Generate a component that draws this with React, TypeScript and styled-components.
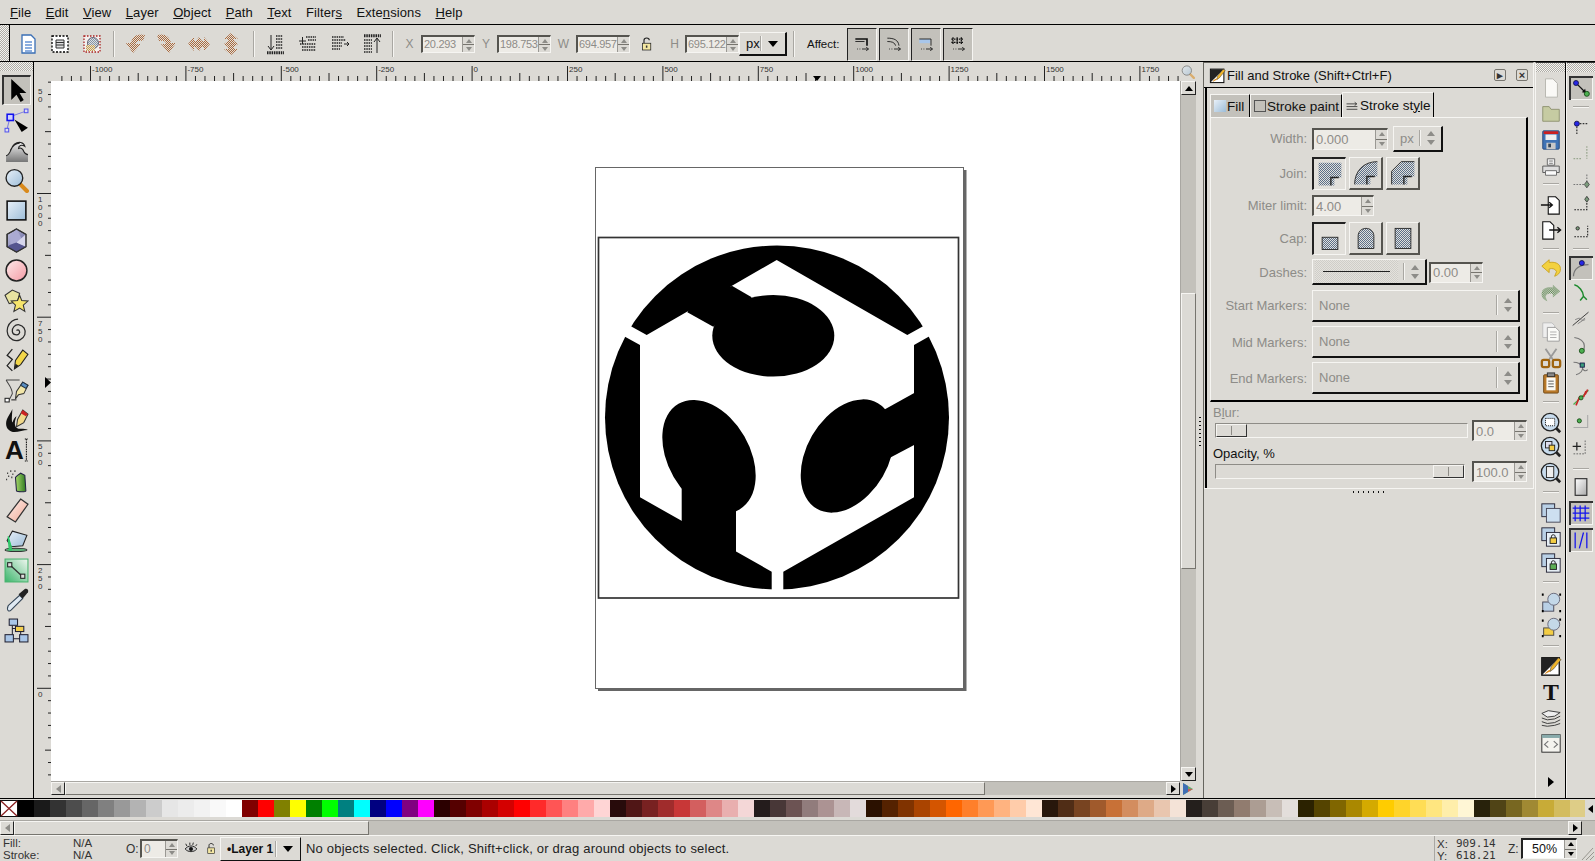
import React from "react";
import styled, { createGlobalStyle } from "styled-components";

const BG = "#dcdad5";
const TROUGH = "#c3c1bb";
const MUTED = "#8d8c88";

const undoPath = "M10 3 2 10l8 7v-4c4-1 7 0 8 3l-2 5c5-2 7-5 6-10-1-4-6-6-12-5z";

const art: Record<string, React.ReactNode> = {
  // left tool column
  select: <path d="M6 1v20l5-5 4 7 3-2-4-6.5h6.5z" fill="#000" />,
  node: (
    <>
      <path d="M7 8 21 3M5 12 3 20" stroke="#7d7de0" fill="none" />
      <rect x="3" y="6" width="6" height="6" fill="#cfd0ff" stroke="#11e" strokeWidth="1.5" />
      <rect x="19.5" y="1" width="3.5" height="3.5" fill="#dde" stroke="#55e" />
      <rect x="1" y="19.5" width="3.5" height="3.5" fill="#dde" stroke="#55e" />
      <path d="M10 11 23 19l-6 4z" fill="#000" />
    </>
  ),
  tweak: (
    <>
      <path d="M2 23v-6c5-1 4-8 8-11 4-3 9-2 10 2-3-2-6-1-6 2 2-1 4 0 5 3 1 2 2 3 4 3v7z" fill="url(#gGrey)" />
      <path d="M2 17c5-1 4-8 8-11 4-3 9-2 10 2-3-2-6-1-6 2 2-1 4 0 5 3 1 2 2 3 4 3M6 12c2-4 5-7 9-7" fill="none" stroke="#222" strokeWidth="1.1" />
    </>
  ),
  zoom: (
    <>
      <path d="M15 15 22 22" stroke="#d98a1c" strokeWidth="4" strokeLinecap="round" />
      <circle cx="10" cy="9.5" r="8" fill="url(#gBlue)" stroke="#222" strokeWidth="1.3" />
    </>
  ),
  rect: <rect x="3" y="3" width="18" height="18" fill="url(#gBlue)" stroke="#111" strokeWidth="1.5" />,
  box3d: (
    <>
      <path d="M12 1l9 5v12l-9 5-9-5V6z" fill="url(#gPurple)" stroke="#333" strokeWidth="1.2" />
      <path d="M12 1 6 7v9l6-2 9 4" fill="#aaaad2" />
      <path d="M6 16l6-2 9 4-9 5-9-5z" fill="#55558f" />
      <path d="M12 14l9-8v12z" fill="#d6d6ec" />
      <path d="M12 1l9 5v12l-9 5-9-5V6z" fill="none" stroke="#333" strokeWidth="1.2" />
    </>
  ),
  ellipse: <circle cx="12" cy="12" r="10" fill="url(#gPink)" stroke="#222" strokeWidth="1.4" />,
  star: (
    <>
      <path d="M1 7l7-5 7 3-2 8-8 2z" fill="#e8e3a0" stroke="#333" />
      <path d="M15 7l2 5 6 .5-4.5 4 1.500 6-5-3.3-5.5 3.3 1.5-6-4-4 6-.5z" fill="#f6e56c" stroke="#333" />
    </>
  ),
  spiral: (
    <path
      d="M12 12c2-2 4 1 2.5 3s-6 1.5-6.5-2 2.5-7 6.5-6.5 7 5 5.5 9.5-7 7-11.5 5-6.5-7-5-12 6-8 10-8"
      fill="none"
      stroke="#2a2a2a"
      strokeWidth="1.2"
    />
  ),
  pencil: (
    <>
      <path d="M8 1 3 7l5 4-5 6 5 5" fill="none" stroke="#222" strokeWidth="1.2" />
      <path d="M10 20l1-8 7-10 5 4-7 10z" fill="#f2d64a" stroke="#222" />
      <path d="M10 20l1-5 3 2z" fill="#222" />
    </>
  ),
  pen: (
    <>
      <path d="M2 2h13M2 2c3 5 6 8 6 13l-3 6" fill="none" stroke="#444" />
      <rect x="1" y="19.5" width="4" height="3.5" fill="#fff" stroke="#222" />
      <path d="M7 21h5" stroke="#222" />
      <path d="M14 16l-3 4 1-7 6-9 5 3-4 8z" fill="#f2e6a8" stroke="#333" />
      <path d="M16 7l2-3 5 3-2 3z" fill="#5a8fc4" stroke="#234" />
    </>
  ),
  callig: (
    <>
      <path d="M8 1c-2 5-6 9-6 14s4 8 8 8 9-2 13-2c-4-2-9 0-11-2-3-3-1-8 0-11-3 2-3 5-4 6-1-3 0-9 0-13z" fill="#111" />
      <path d="M12 18l1-7 5-9 5 4-4 8z" fill="#f0d88a" stroke="#333" />
      <path d="M16 5l2-3 5 4-2 2z" fill="#c22" />
    </>
  ),
  textTool: (
    <>
      <text x="1" y="20" fontFamily="Liberation Sans" fontWeight="700" fontSize="25" fill="#111">A</text>
      <path d="M20 1h3M21.5 1v21M20 22h3" stroke="#111" strokeDasharray="1.5 .8" fill="none" />
    </>
  ),
  spray: (
    <>
      <path d="M3 5h1M6 3h1M8 6h1M4 8h1M7 9h1M2 11h1M10 3h1" stroke="#333" strokeWidth="1.5" />
      <path d="M11 9l2-2 3-2 4 2 1 15c0 1-8 1-9 0z" fill="url(#gGreen)" stroke="#224" />
    </>
  ),
  eraser: <path d="M16 1l7 5-12 17-8-5z" fill="url(#gSalmon)" stroke="#333" strokeWidth="1.2" />,
  bucket: (
    <>
      <path d="M1 21c0-2 20-2 21 0 0 2-21 2-21 0z" fill="#5fb37a" stroke="#333" />
      <path d="M8 3l14 4-4 10-11 1-4-6z" fill="url(#gBlue)" stroke="#222" />
      <path d="M4 8l3 10v3H5z" fill="#57b56f" stroke="#2c6" />
    </>
  ),
  gradient: (
    <>
      <rect x="1" y="1" width="22" height="22" fill="url(#gGreenFade)" stroke="#47b36d" />
      <path d="M6 7 18 18" stroke="#333" strokeWidth="1.3" />
      <rect x="3.5" y="4.5" width="4" height="4" fill="#ddd" stroke="#222" />
      <rect x="16" y="15.5" width="4" height="4" fill="#ddd" stroke="#222" />
    </>
  ),
  dropper: (
    <>
      <path d="M4 17 15 7l3 3L7 21c-2 2-5 1-3-4z" fill="#dfe9f2" stroke="#345" />
      <path d="M14 6l6-5c2-1 4 1 3 3l-5 6z" fill="#222" />
    </>
  ),
  connector: (
    <>
      <path d="M8 7v3h8v6M8 10v6M5 20h14" stroke="#223" fill="none" />
      <rect x="5" y="1" width="8" height="6" fill="#a9c6e8" stroke="#223" />
      <rect x="11" y="8" width="8" height="5" fill="#f4cf4d" stroke="#223" />
      <rect x="1" y="16" width="8" height="7" fill="#a9c6e8" stroke="#223" />
      <rect x="15" y="16" width="8" height="7" fill="#a9c6e8" stroke="#223" />
    </>
  ),
  // top toolbar
  newDoc: (
    <>
      <path d="M6 3h9l4 4v14H6z" fill="#fff" stroke="#3a6fb5" strokeWidth="1.3" />
      <path d="M9 10h7M9 13h7M9 16h7M9 19h7" stroke="#1a5fc0" strokeWidth="1.2" />
    </>
  ),
  selAll: (
    <>
      <rect x="4" y="4" width="16" height="16" fill="#fff" stroke="#000" strokeWidth="1.3" strokeDasharray="2 1.5" />
      <path d="M8 8h8v8H8z" fill="#ddd" stroke="#333" />
      <path d="M8 10.5h8M8 13h8" stroke="#333" />
    </>
  ),
  selLayers: (
    <>
      <rect x="4" y="4" width="16" height="16" fill="#f4f0ee" stroke="#a22" strokeWidth="1.3" strokeDasharray="1.5 1.5" />
      <circle cx="13" cy="11" r="5.5" fill="url(#ditherBlue)" stroke="#667" />
      <rect x="6" y="13" width="9" height="6" fill="url(#ditherGold)" />
    </>
  ),
  rotCcw: <path d="M22 3c-7-2-13 1-14 8H3l7 10 8-9h-5c0-3 3-4 7-3z" fill="url(#ditherBrown)" />,
  rotCw: <path d="M2 3c7-2 13 1 14 8h5l-7 10-8-9h5c0-3-3-4-7-3z" fill="url(#ditherBrown)" />,
  flipH: <path d="M1 12l6-7v4h2l3-4 3 4h2V5l6 7-6 7v-4h-2l-3 4-3-4H7v4z" fill="url(#ditherBrown)" />,
  flipV: <path d="M12 1l7 6h-4v2l4 3-4 3v2h4l-7 6-7-6h4v-2l-4-3 4-3V7H5z" fill="url(#ditherBrown)" />,
  alignBottom: (
    <>
      <path d="M7 3v14M4 14l3 4 3-4" stroke="#222" fill="none" />
      <path d="M12 4h7M12 7h7M12 10h7M12 13h7M12 16h7M3 20h17M3 21.5h17" stroke="#222" strokeWidth="1.3" strokeDasharray="1.5 .8" />
    </>
  ),
  alignDown: (
    <>
      <path d="M3 9h7M6.5 5v7" stroke="#222" />
      <path d="M10 5h10M12 8h8M4 12h16M6 15h14M6 18h14" stroke="#222" strokeWidth="1.3" strokeDasharray="1.5 .8" />
    </>
  ),
  alignUp: (
    <>
      <path d="M4 5h12M4 8h14M4 11h10M4 14h10M4 17h8" stroke="#222" strokeWidth="1.3" strokeDasharray="1.5 .8" />
      <path d="M16 12h5M19 10l2 2-2 2" stroke="#222" fill="none" />
    </>
  ),
  alignTop: (
    <>
      <path d="M4 3h17M4 4.5h17M4 8h8M4 11h8M4 14h8M4 17h8M4 20h8" stroke="#222" strokeWidth="1.3" strokeDasharray="1.5 .8" />
      <path d="M17 21V7M14 10l3-4 3 4" stroke="#222" fill="none" />
    </>
  ),
  lockOpen: (
    <>
      <path d="M8 11V7c0-4 7-4 7 0" fill="none" stroke="#222" strokeWidth="1.5" />
      <rect x="6" y="11" width="11" height="9" fill="#f4e7a2" stroke="#222" />
      <rect x="10.5" y="14" width="2" height="3" fill="#333" />
    </>
  ),
  affect1: (
    <>
      <path d="M4 6h14v8" fill="none" stroke="#111" strokeWidth="2" />
      <path d="M4 9h11" stroke="#111" />
      <path d="M6 18h1M9 18h1M12 18h7M17 16l3 2-3 2" stroke="#111" fill="none" />
    </>
  ),
  affect2: (
    <>
      <path d="M4 5c8 0 13 2 14 9M4 9c5 0 9 1 10 5" fill="none" stroke="#111" />
      <path d="M6 18h1M9 18h1M12 18h7M17 16l3 2-3 2" stroke="#111" fill="none" />
    </>
  ),
  affect3: (
    <>
      <rect x="4" y="6" width="13" height="5" fill="#a8c6ea" />
      <path d="M4 6h14v8" fill="none" stroke="#111" />
      <path d="M6 18h1M9 18h1M12 18h7M17 16l3 2-3 2" stroke="#111" fill="none" />
    </>
  ),
  affect4: (
    <>
      <path d="M4 6h15M4 10h15M6 4v8M11 4v8M16 4v8" stroke="#111" strokeWidth="1.5" strokeDasharray="2 1" />
      <path d="M6 18h1M9 18h1M12 18h7M17 16l3 2-3 2" stroke="#111" fill="none" />
    </>
  ),
  // command bar
  docBlank: <path d="M6 2h8l5 5v15H6z" fill="#faf9f6" stroke="#b5b3ad" />,
  folder: <path d="M3 5h7l2 3h9v13H3z" fill="#c6cba2" stroke="#8d9270" />,
  save: (
    <>
      <rect x="3" y="2" width="18" height="20" rx="1" fill="#3f73b5" stroke="#24467a" />
      <rect x="4" y="2.5" width="16" height="3" fill="#cc1f1f" />
      <rect x="6" y="6" width="12" height="6" fill="#eee" />
      <rect x="7" y="15" width="10" height="7" fill="#c8c8c8" />
      <rect x="9" y="16" width="3" height="4" fill="#345" />
    </>
  ),
  print: (
    <>
      <path d="M8 3h8v7H8z" fill="#eee" stroke="#666" />
      <path d="M3 11h18v7H3z" fill="#ddd" stroke="#555" />
      <path d="M6 16h12v5H6z" fill="#fafafa" stroke="#666" />
      <path d="M10 5.5h4M10 8h4" stroke="#777" />
    </>
  ),
  importDoc: (
    <>
      <path d="M9 3h8l4 4v15H9z" fill="#fff" stroke="#111" strokeWidth="1.2" />
      <path d="M1 12h12M10 9l3.5 3-3.5 3" stroke="#111" strokeWidth="1.4" fill="none" />
    </>
  ),
  exportDoc: (
    <>
      <path d="M3 3h8l4 4v15H3z" fill="#fff" stroke="#111" strokeWidth="1.2" />
      <path d="M10 12h12M19 9l3.5 3-3.5 3" stroke="#111" strokeWidth="1.4" fill="none" />
    </>
  ),
  undo: <path d={undoPath} fill="#f3d13f" stroke="#c9a21f" />,
  redo: <path d={undoPath} transform="matrix(-1 0 0 1 24 0)" fill="url(#ditherGreen)" />,
  copy: (
    <>
      <path d="M3 2h10l3 3v13H3z" fill="#eee" stroke="#bbb" />
      <path d="M8 7h9l4 4v11H8z" fill="#fbfbf8" stroke="#999" />
      <path d="M11 12h7M11 15h7M11 18h7" stroke="#aaa" />
    </>
  ),
  cut: (
    <>
      <path d="M6 2l9 13M18 2 9 15" stroke="#999" strokeWidth="2" />
      <rect x="2" y="14" width="8" height="8" rx="2" fill="none" stroke="#a0640f" strokeWidth="2.5" />
      <rect x="14" y="14" width="8" height="8" rx="2" fill="none" stroke="#a0640f" strokeWidth="2.5" />
    </>
  ),
  paste: (
    <>
      <rect x="4" y="3" width="16" height="20" rx="1" fill="#b97a2a" stroke="#6d4513" />
      <rect x="7" y="6" width="10" height="14" fill="#fbfaf4" />
      <rect x="8" y="1" width="8" height="4" fill="#888" stroke="#333" />
      <path d="M9 10h6M9 13h6M9 16h6" stroke="#555" />
    </>
  ),
  zoomSel: (
    <>
      <path d="M17 17l5 5" stroke="#222" strokeWidth="3" />
      <circle cx="11" cy="11" r="9.5" fill="#c8dcee" stroke="#222" strokeWidth="1.4" />
      <rect x="6" y="7" width="10" height="8" fill="#fff" stroke="#111" strokeDasharray="1.2 1" />
    </>
  ),
  zoomDraw: (
    <>
      <path d="M17 17l5 5" stroke="#222" strokeWidth="3" />
      <circle cx="11" cy="11" r="9.5" fill="#c8dcee" stroke="#222" strokeWidth="1.4" />
      <rect x="6" y="6" width="7" height="7" fill="#dde" stroke="#222" />
      <rect x="10" y="10" width="6" height="6" fill="#f3cd44" stroke="#222" />
    </>
  ),
  zoomPage: (
    <>
      <path d="M17 17l5 5" stroke="#222" strokeWidth="3" />
      <circle cx="11" cy="11" r="9.5" fill="#c8dcee" stroke="#222" strokeWidth="1.4" />
      <rect x="7" y="5" width="8" height="12" fill="#eee" stroke="#222" />
    </>
  ),
  dup: (
    <>
      <rect x="2" y="2" width="14" height="14" fill="#b9d0e6" stroke="#223" />
      <rect x="7" y="7" width="15" height="15" fill="#cddff0" stroke="#445" />
    </>
  ),
  clone: (
    <>
      <rect x="2" y="2" width="14" height="14" fill="#b9d0e6" stroke="#223" />
      <rect x="7" y="7" width="15" height="15" fill="#e6eef5" stroke="#223" />
      <rect x="11" y="13" width="7" height="6" fill="#f3cd44" stroke="#222" />
      <path d="M12.5 13v-2c0-2 4-2 4 0v2" fill="none" stroke="#222" />
    </>
  ),
  unlink: (
    <>
      <rect x="2" y="2" width="14" height="14" fill="#b9d0e6" stroke="#223" />
      <rect x="7" y="7" width="15" height="15" fill="#e6eef5" stroke="#223" />
      <rect x="11" y="13" width="7" height="6" fill="#5cae55" stroke="#222" />
      <path d="M12.5 13v-2c0-2 4-2 4 0v2" fill="none" stroke="#222" />
    </>
  ),
  group: (
    <>
      <rect x="3" y="12" width="12" height="10" fill="#b9d0e6" stroke="#445" />
      <circle cx="15" cy="9" r="6.5" fill="#c4d8e8" stroke="#667" />
      <path d="M2 4h2M2 22h2M21 4h2M21 22h2" stroke="#000" strokeWidth="2.5" />
    </>
  ),
  ungroup: (
    <>
      <rect x="4" y="13" width="11" height="8" fill="#f3cd44" stroke="#444" />
      <circle cx="15" cy="9" r="6.5" fill="#c4d8e8" stroke="#667" />
      <path d="M2 5h2M2 22h2M21 4h2M21 22h2" stroke="#000" strokeWidth="2.5" />
    </>
  ),
  fillStroke: (
    <>
      <rect x="2" y="3" width="19" height="19" fill="#fff" stroke="#111" strokeWidth="1.5" />
      <path d="M2 22V3h19z" fill="#222" />
      <path d="M11 18l1-5 8-10 3 2-8 10z" fill="#f0b429" stroke="#333" strokeWidth=".6" />
      <path d="M11 18c-2 1-4 2-6 3 1-2 3-4 6-5z" fill="#d98a1c" />
    </>
  ),
  textCmd: <text x="12" y="21" textAnchor="middle" fontFamily="Liberation Serif" fontWeight="700" fontSize="26" fill="#111">T</text>,
  layers: (
    <>
      <path d="M2 7l7-3 13 2-6 4-8 1z" fill="#eee" stroke="#333" />
      <path d="M2 12l6 2 8-1 6-3M2 16l6 2 8-1 6-3M2 20l6 1 8-1 6-2" fill="none" stroke="#333" />
    </>
  ),
  xml: (
    <>
      <rect x="2" y="3" width="20" height="19" fill="#f4f3ee" stroke="#222" />
      <rect x="2" y="3" width="20" height="3.5" fill="#8aa" />
      <path d="M9 10l-4 3.5L9 17M15 10l4 3.5L15 17" fill="none" stroke="#777" strokeWidth="1.3" />
    </>
  ),
  // snap bar
  snapToggle: (
    <>
      <path d="M7 7l11 11" stroke="#111" strokeWidth="1.5" />
      <path d="M18 18l-5-1 4-4z" fill="#111" />
      <circle cx="6" cy="6" r="3" fill="#2626e6" stroke="#114" />
      <circle cx="19" cy="19" r="3" fill="#4caf50" stroke="#141" />
    </>
  ),
  snapBox: (
    <>
      <path d="M7 8h14M7 8v14" stroke="#333" strokeWidth="1.5" strokeDasharray="2 1.5" />
      <circle cx="7" cy="8" r="3" fill="#2626e6" stroke="#114" />
    </>
  ),
  snapFaint1: <path d="M3 20h10M19 5v15" stroke="#99a68f" strokeWidth="1.5" strokeDasharray="2 1.5" fill="none" />,
  snapEdge: (
    <>
      <path d="M3 15h16M19 3v12" stroke="#777" strokeWidth="1.3" strokeDasharray="2 1.5" />
      <path d="M19 11l3 4-3 4-3-4z" fill="#7c9c7c" stroke="#444" />
    </>
  ),
  snapMid: (
    <>
      <path d="M4 20h15v-8" fill="none" stroke="#222" strokeWidth="1.3" strokeDasharray="2 1.5" />
      <path d="M19 4l2.5 3.5L19 11l-2.5-3.5z" fill="#7c9c7c" stroke="#333" />
    </>
  ),
  snapCenter: (
    <>
      <path d="M4 20h16V7" fill="none" stroke="#222" strokeWidth="1.3" strokeDasharray="2 1.5" />
      <circle cx="8" cy="10" r="2" fill="#7c9c7c" stroke="#222" />
    </>
  ),
  snapNodes: (
    <>
      <path d="M3 22c0-9 7-14 18-14" fill="none" stroke="#777" strokeWidth="1.4" />
      <circle cx="13" cy="6" r="3" fill="#2626e6" stroke="#114" />
    </>
  ),
  snapPath: <path d="M4 2c5 1 11 8 11 14M11 21l4-5 4 4" fill="none" stroke="#1d8a2e" strokeWidth="1.8" />,
  snapCross: (
    <>
      <path d="M2 21 21 5" stroke="#222" />
      <path d="M5 14l5-2 3 3 4-3M8 19l6-4 3-1" stroke="#777" fill="none" />
    </>
  ),
  snapSmooth: (
    <>
      <path d="M4 3c7 1 12 5 12 10s-2 8-4 9" fill="none" stroke="#777" strokeWidth="1.4" />
      <circle cx="13" cy="19" r="3" fill="#4caf50" stroke="#141" />
    </>
  ),
  snapCusp: (
    <>
      <path d="M3 5c4 0 9 2 11 6M14 11c-1 3 3 6 6 3M14 11c0 5-4 8-8 9" fill="none" stroke="#777" strokeWidth="1.3" />
      <rect x="11" y="6" width="5" height="5" fill="#3a9c7c" stroke="#114" />
    </>
  ),
  snapMidLine: (
    <>
      <path d="M3 21l18-17" stroke="#4caf50" strokeWidth="1.5" />
      <path d="M6 22 9 15M8 17l3-6M15 12l3-7M17 9l3-6" stroke="#c62828" strokeWidth="2" />
      <circle cx="12" cy="13" r="2.5" fill="#4caf50" stroke="#141" />
    </>
  ),
  snapDot: (
    <>
      <path d="M3 21h17V6" fill="none" stroke="#aaa" strokeWidth="1.3" />
      <circle cx="10" cy="13" r="2.5" fill="#4caf50" stroke="#141" />
    </>
  ),
  snapPlus: (
    <>
      <path d="M7 5v10M2 10h10" stroke="#222" strokeWidth="1.5" />
      <path d="M17 3v16M3 19h14" stroke="#555" strokeDasharray="2 1.5" />
    </>
  ),
  pageEdge: <rect x="5" y="2" width="14" height="20" fill="url(#gPage)" stroke="#333" strokeWidth="1.4" />,
  grid: <path d="M5 3v19M11 3v19M17 3v19M2 6h20M2 12h20M2 18h20" stroke="#1414ee" strokeWidth="1.5" />,
  guide: <path d="M5 3v19M19 3v19M10 22 15 3" stroke="#1414ee" strokeWidth="1.5" />,
  // panel tabs
  strokeStyle: <path d="M1 9h18M1 14h20M1 19h20M16 6l4 3-4 3" stroke="#111" fill="none" strokeWidth="1.3" />,
  eye: (
    <>
      <path d="M2 12c5-7 15-7 20 0-5 6-15 6-20 0z" fill="#ccc" stroke="#111" strokeWidth="1.5" />
      <circle cx="12" cy="12" r="3.5" fill="#111" />
      <path d="M5 7 3 3M10 5V1M15 5l1-4M20 7l2-3" stroke="#111" strokeWidth="1.5" />
    </>
  ),
  // join and cap buttons
  joinMiter: (
    <>
      <path d="M3 3h26v17h-8v9H3z" fill="url(#ditherSteel)" />
      <path d="M17 29v-9h9" fill="none" stroke="#222" strokeWidth="1.5" />
    </>
  ),
  joinRound: (
    <>
      <path d="M3 29c0-15 10-26 26-26v17h-8v9z" fill="url(#ditherSteel)" />
      <path d="M3 29C3 14 13 3 29 3" fill="none" stroke="#222" />
      <path d="M17 29v-9h9" fill="none" stroke="#222" strokeWidth="1.5" />
    </>
  ),
  joinBevel: (
    <>
      <path d="M3 29V14L14 3h15v17h-8v9z" fill="url(#ditherSteel)" />
      <path d="M3 29V14L14 3h15" fill="none" stroke="#222" />
      <path d="M17 29v-9h9" fill="none" stroke="#222" strokeWidth="1.5" />
    </>
  ),
  capButt: <rect x="7" y="14" width="18" height="14" fill="url(#ditherSteel)" stroke="#222" />,
  capRound: <path d="M7 28V14c0-12 18-12 18 0v14z" fill="url(#ditherSteel)" stroke="#222" />,
  capSquare: <rect x="7" y="5" width="18" height="23" fill="url(#ditherSteel)" stroke="#222" />,
};

const palette =
  "000000 1a1a1a 333333 4d4d4d 666666 808080 999999 b3b3b3 cccccc e6e6e6 ececec f2f2f2 f9f9f9 ffffff " +
  "800000 ff0000 808000 ffff00 008000 00ff00 008080 00ffff 000080 0000ff 800080 ff00ff " +
  "2b0000 550000 800000 aa0000 d40000 ff0000 ff2a2a ff5555 ff8080 ffaaaa ffd5d5 " +
  "280b0b 501616 782121 a02c2c c83737 d35f5f de8787 e9afaf f4d7d7 " +
  "241c1c 483737 6c5353 917c7c ac9393 c8b7b7 e3dbdb " +
  "2b1100 552200 803300 aa4400 d45500 ff6600 ff7f2a ff9955 ffb380 ffccaa ffe6d5 " +
  "28170b 502d16 784421 a05a2c c87137 d38d5f deaa87 e9c6af f4e3d7 " +
  "241f1c 483e37 6c5d53 917c6f ac9d93 c8beb7 e3dedb " +
  "2b2200 554400 806600 aa8800 d4aa00 ffcc00 ffd42a ffdd55 ffe680 ffeeaa fff6d5 " +
  "28220b 504416 786721 a08933 c8ab37 d3bc5f decd87";

const menus: [string, string, string][] = [
  ["", "F", "ile"],
  ["", "E", "dit"],
  ["", "V", "iew"],
  ["", "L", "ayer"],
  ["", "O", "bject"],
  ["", "P", "ath"],
  ["", "T", "ext"],
  ["Filter", "s", ""],
  ["Exte", "n", "sions"],
  ["", "H", "elp"],
];

const leftTools = [
  "select", "node", "tweak", "zoom", "rect", "box3d", "ellipse", "star", "spiral", "pencil",
  "pen", "callig", "textTool", "spray", "eraser", "bucket", "gradient", "dropper", "connector",
];

// [icon or "-" for a separator, space above, pressed]
const commands: [string, number, boolean?][] = [
  ["docBlank", 4], ["folder", 1], ["save", 3], ["print", 3], ["-", 4], ["importDoc", 8], ["exportDoc", 1],
  ["-", 6], ["undo", 6], ["redo", 1], ["-", 7], ["copy", 6], ["cut", 2], ["paste", 1], ["-", 6],
  ["zoomSel", 8], ["zoomDraw", 0], ["zoomPage", 2], ["-", 6], ["dup", 8], ["clone", 0], ["unlink", 2],
  ["-", 6], ["group", 7], ["ungroup", 1], ["-", 6], ["fillStroke", 7], ["textCmd", 2], ["layers", 2], ["xml", 1],
];

const snaps: [string, number, boolean?][] = [
  ["snapToggle", 4, true], ["-", 6], ["snapBox", 7], ["snapFaint1", 1], ["snapEdge", 6], ["snapMid", -3],
  ["snapCenter", 3], ["-", 6], ["snapNodes", 6, true], ["snapPath", 1], ["snapCross", 1], ["snapSmooth", 3],
  ["snapCusp", -1], ["snapMidLine", 5], ["snapDot", -1], ["snapPlus", 4], ["-", 8], ["pageEdge", 5],
  ["grid", 2, true], ["guide", 3, true],
];

const GlobalStyle = createGlobalStyle`
  html, body {
    margin: 0;
    overflow: hidden;
    background: ${BG};
  }
`;

const Root = styled.div`
  width: 1595px;
  height: 861px;
  display: flex;
  flex-direction: column;
  background: ${BG};
  color: #111;
  font-family: "Liberation Sans", Arial, sans-serif;
  font-size: 13px;
  overflow: hidden;
`;

const Defs = styled.svg`
  position: absolute;
  width: 0;
  height: 0;
`;

const IconSvg = styled.svg`
  display: block;
  flex: none;
`;

const Icon: React.FC<{ n: string; s?: number; box?: number }> = ({ n, s = 24, box = 24 }) => (
  <IconSvg width={s} height={s} viewBox={`0 0 ${box} ${box}`}>
    {art[n]}
  </IconSvg>
);

const Grip = styled.div`
  background: repeating-conic-gradient(#f5f4f1 0 25%, #aeaca6 0 50%) 0 0 / 2px 2px;
`;

const MenuBar = styled.div`
  height: 24px;
  flex: none;
  display: flex;
  align-items: center;
  gap: 14.4px;
  padding-left: 10px;
  border-bottom: 1px solid #000;
`;

const MenuItem = styled.span`
  font-size: 13px;
  letter-spacing: 0.1px;
`;

const Toolbar = styled.div`
  height: 36px;
  flex: none;
  box-sizing: content-box;
  display: flex;
  align-items: center;
  border-bottom: 1px solid #000;
`;

const ToolbarGrip = styled(Grip)`
  width: 9px;
  height: 100%;
  border-right: 1px solid #000;
  margin-right: 2px;
`;

const ToolbarRow = styled.div`
  flex: 1;
  height: 100%;
  padding-top: 2px;
  box-sizing: border-box;
  display: flex;
  align-items: center;
`;

const ActionSlot = styled.div`
  width: 32px;
  height: 30px;
  flex: none;
  display: flex;
  align-items: center;
  justify-content: center;
`;

const ToolbarSep = styled.div<{ $w: number }>`
  width: ${(p) => p.$w}px;
  height: 26px;
  flex: none;
  display: flex;
  justify-content: center;

  &::after {
    content: "";
    width: 1px;
    height: 100%;
    background: #a9a7a2;
    border-right: 1px solid #f6f5f2;
  }
`;

const CoordLabel = styled.span<{ $w: number }>`
  width: ${(p) => p.$w}px;
  flex: none;
  text-align: center;
  font-size: 12px;
  color: ${MUTED};
`;

const LockSlot = styled.div`
  width: 34px;
  flex: none;
  display: flex;
  justify-content: center;
`;

const AffectLabel = styled.span`
  width: 40px;
  margin-left: 7px;
  flex: none;
  font-size: 11.5px;
`;

const AffectButton = styled.div`
  width: 30px;
  height: 33px;
  margin-right: 2px;
  flex: none;
  display: flex;
  align-items: center;
  justify-content: center;
  background: ${TROUGH};
  border-top: 1px solid #222;
  border-left: 1px solid #222;
  border-right: 1px solid #f6f5f2;
  border-bottom: 1px solid #f6f5f2;
  box-sizing: border-box;
`;

const SpinBox = styled.div<{ $w: number; $h: number }>`
  width: ${(p) => p.$w}px;
  height: ${(p) => p.$h}px;
  flex: none;
  box-sizing: border-box;
  display: flex;
  border-top: 2px solid #55544f;
  border-left: 2px solid #55544f;
  border-right: 1px solid #f6f5f2;
  border-bottom: 1px solid #f6f5f2;
  background: #edebe6;
`;

const SpinValue = styled.div<{ $fs: number; $tight?: boolean }>`
  flex: 1;
  min-width: 0;
  padding-left: ${(p) => (p.$tight ? 1 : 2)}px;
  white-space: nowrap;
  color: ${MUTED};
  font-size: ${(p) => p.$fs}px;
  letter-spacing: ${(p) => (p.$tight ? "-0.3px" : "0")};
  line-height: 1;
  display: flex;
  align-items: center;
`;

const SpinArrows = styled.div`
  width: 11px;
  flex: none;
  display: flex;
  flex-direction: column;
  border-left: 1px solid #9a9893;
  background: ${BG};
`;

const SpinHalf = styled.div<{ $down?: boolean }>`
  flex: 1;
  display: flex;
  align-items: center;
  justify-content: center;
  border-top: ${(p) => (p.$down ? "1px solid #77756f" : "none")};

  &::after {
    content: "";
    border-left: 3px solid transparent;
    border-right: 3px solid transparent;
    ${(p) => (p.$down ? "border-top: 4px solid #8d8c88;" : "border-bottom: 4px solid #8d8c88;")}
  }
`;

const Spin: React.FC<{ w: number; h: number; v: string; fs?: number; tight?: boolean }> = ({ w, h, v, fs = 13, tight }) => (
  <SpinBox $w={w} $h={h}>
    <SpinValue $fs={fs} $tight={tight}>{v}</SpinValue>
    <SpinArrows>
      <SpinHalf />
      <SpinHalf $down />
    </SpinArrows>
  </SpinBox>
);

const Combo = styled.div<{ $w: number; $h: number }>`
  width: ${(p) => p.$w}px;
  height: ${(p) => p.$h}px;
  flex: none;
  box-sizing: border-box;
  display: flex;
  align-items: center;
  background: ${BG};
  border-top: 1px solid #f6f5f2;
  border-left: 1px solid #f6f5f2;
  border-right: 2px solid #111;
  border-bottom: 2px solid #111;
`;

const ComboText = styled.span<{ $muted?: boolean }>`
  flex: 1;
  padding-left: 6px;
  color: ${(p) => (p.$muted ? MUTED : "#111")};
  font-size: 13px;
`;

const ComboSep = styled.i`
  width: 1px;
  height: 70%;
  flex: none;
  background: #a9a7a2;
  border-right: 1px solid #f6f5f2;
`;

const ArrowDown = styled.i`
  margin: 0 7px 0 6px;
  flex: none;
  border-left: 5px solid transparent;
  border-right: 5px solid transparent;
  border-top: 6px solid #000;
`;

const UpDown = styled.i`
  width: 9px;
  height: 16px;
  margin: 0 5px 0 6px;
  flex: none;
  position: relative;

  &::before,
  &::after {
    content: "";
    position: absolute;
    left: 0;
    border-left: 4px solid transparent;
    border-right: 4px solid transparent;
  }
  &::before {
    top: 1px;
    border-bottom: 5px solid ${MUTED};
  }
  &::after {
    bottom: 1px;
    border-top: 5px solid ${MUTED};
  }
`;

const Workspace = styled.div`
  height: 736px;
  flex: none;
  display: flex;
  border-bottom: 1px solid #000;
`;

const ToolColumn = styled.div`
  width: 33px;
  flex: none;
  display: flex;
  flex-direction: column;
  align-items: center;
  border-right: 1px solid #000;
`;

const ColumnGrip = styled(Grip)`
  align-self: stretch;
  height: 9px;
  margin-bottom: 4px;
`;

const ToolSlot = styled.div<{ $on?: boolean }>`
  width: 29px;
  height: 30px;
  flex: none;
  display: flex;
  align-items: center;
  justify-content: center;
  box-sizing: border-box;
  ${(p) =>
    p.$on &&
    `background: ${TROUGH};
     border-top: 2px solid #333;
     border-left: 2px solid #333;
     border-right: 1px solid #f6f5f2;
     border-bottom: 1px solid #f6f5f2;`}
`;

const CanvasArea = styled.div`
  width: 1169px;
  flex: none;
  display: grid;
  grid-template-columns: 17px 1129px 16px 7px;
  grid-template-rows: 19px 700px 14px 1fr;
`;

const Ruler = styled.svg<{ $wide?: boolean }>`
  display: block;
  background: ${BG};
  ${(p) => p.$wide && "grid-column: 1 / 3;"}
`;

const ZoomCorner = styled.div`
  display: flex;
  align-items: center;
  justify-content: center;
  opacity: 0.55;
`;

const Canvas = styled.svg`
  display: block;
  background: #fff;
`;

const VScroll = styled.div`
  display: flex;
  flex-direction: column;
  grid-column: 3;
  grid-row: 2;
  background: ${TROUGH};
  border-left: 1px solid #a9a7a2;
  box-sizing: border-box;
`;

const HScroll = styled.div`
  display: flex;
  background: ${TROUGH};
  border-top: 1px solid #a9a7a2;
  box-sizing: border-box;
`;

const ScrollArrow = styled.div<{ $dir: "up" | "down" | "left" | "right"; $muted?: boolean }>`
  flex: none;
  width: ${(p) => (p.$dir === "up" || p.$dir === "down" ? "100%" : "14px")};
  height: ${(p) => (p.$dir === "up" || p.$dir === "down" ? "14px" : "100%")};
  box-sizing: border-box;
  display: flex;
  align-items: center;
  justify-content: center;
  background: ${BG};
  border-top: 1px solid #f6f5f2;
  border-left: 1px solid #f6f5f2;
  border-right: 1px solid #222;
  border-bottom: 1px solid #222;

  &::after {
    content: "";
    ${(p) => {
      const c = p.$muted ? "#8d8c88" : "#000";
      if (p.$dir === "up") return `border-left:4px solid transparent;border-right:4px solid transparent;border-bottom:5px solid ${c};`;
      if (p.$dir === "down") return `border-left:4px solid transparent;border-right:4px solid transparent;border-top:5px solid ${c};`;
      if (p.$dir === "left") return `border-top:4px solid transparent;border-bottom:4px solid transparent;border-right:5px solid ${c};`;
      return `border-top:4px solid transparent;border-bottom:4px solid transparent;border-left:5px solid ${c};`;
    }}
  }
`;

const ScrollThumb = styled.div<{ $size: number; $vertical?: boolean }>`
  flex: none;
  ${(p) => (p.$vertical ? `height: ${p.$size}px;` : `width: ${p.$size}px;`)}
  box-sizing: border-box;
  background: ${BG};
  border-top: 1px solid #f6f5f2;
  border-left: 1px solid #f6f5f2;
  border-right: 1px solid #77756f;
  border-bottom: 1px solid #77756f;
`;

const ScrollGap = styled.div<{ $size?: number; $vertical?: boolean }>`
  ${(p) => (p.$size ? (p.$vertical ? `height: ${p.$size}px;` : `width: ${p.$size}px;`) : "flex: 1;")}
  flex-shrink: 0;
`;

const CmsIcon = styled.div`
  display: flex;
  justify-content: center;
  padding-top: 2px;
`;

const DockGripColumn = styled.div`
  grid-column: 4;
  grid-row: 1 / 5;
  display: flex;
  align-items: center;
  justify-content: center;
  padding-top: 6px;
`;

const DotsV = styled.div`
  width: 2px;
  height: 32px;
  background: repeating-linear-gradient(#111 0 1px, transparent 1px 4px);
`;

const Dock = styled.div`
  width: 331px;
  flex: none;
  display: flex;
  flex-direction: column;
  border-left: 1px solid #66655f;
`;

const DockPanel = styled.div`
  height: 427px;
  flex: none;
  box-sizing: border-box;
  margin-right: 1px;
  border-top: 1px solid #66655f;
  border-right: 1px solid #f6f5f2;
  border-bottom: 1px solid #f6f5f2;
  display: flex;
  flex-direction: column;
`;

const DockTitle = styled.div`
  height: 24px;
  flex: none;
  display: flex;
  align-items: center;
  padding: 0 5px;
  border-bottom: 1px solid #000;
`;

const DockTitleText = styled.span`
  margin-left: 1px;
  flex: 1;
  font-size: 13px;
`;

const DockButton = styled.div`
  width: 10px;
  height: 10px;
  margin-left: 10px;
  flex: none;
  border: 1px solid #77756f;
  border-radius: 2px;
  display: flex;
  align-items: center;
  justify-content: center;
  color: #333;
  font-size: 11px;
  line-height: 1;
  font-weight: 700;
`;

const DockBody = styled.div`
  flex: 1;
  padding: 4px 5px 0 2px;
  margin-left: 1px;
  border-left: 2px solid #000;
  display: flex;
  flex-direction: column;
`;

const Tabs = styled.div`
  height: 25px;
  flex: none;
  display: flex;
  align-items: flex-end;
  padding-left: 1px;
`;

const Tab = styled.div<{ $on?: boolean; $w: number }>`
  width: ${(p) => p.$w}px;
  height: ${(p) => (p.$on ? 25 : 23)}px;
  box-sizing: border-box;
  flex: none;
  display: flex;
  align-items: center;
  gap: 1px;
  padding-left: 3px;
  background: ${(p) => (p.$on ? BG : TROUGH)};
  border-top: 1px solid #f6f5f2;
  border-left: 1px solid #f6f5f2;
  border-right: 1px solid #000;
  font-size: 13.5px;
  white-space: nowrap;
`;

const Notebook = styled.div`
  width: 318px;
  box-sizing: border-box;
  flex: none;
  margin-left: 1px;
  padding: 4px 6px 4px 0;
  border-top: 1px solid #f6f5f2;
  border-left: 1px solid #f6f5f2;
  border-right: 2px solid #000;
  border-bottom: 2px solid #000;
  display: grid;
  grid-template-columns: 96px 1fr;
  grid-template-rows: 33px 36px 29px 37px 30px 37px 36px 36px;
  column-gap: 5px;
  align-items: center;
`;

const FormLabel = styled.span`
  text-align: right;
  color: ${MUTED};
  font-size: 13px;
  white-space: nowrap;
`;

const Controls = styled.div<{ $gap?: number }>`
  display: flex;
  align-items: center;
  gap: ${(p) => p.$gap ?? 0}px;
`;

const Toggle = styled.div<{ $on?: boolean }>`
  width: 34px;
  height: 33px;
  flex: none;
  box-sizing: border-box;
  display: flex;
  align-items: center;
  justify-content: center;
  background: ${BG};
  ${(p) =>
    p.$on
      ? `border-top: 2px solid #222; border-left: 2px solid #222; border-right: 1px solid #f6f5f2; border-bottom: 1px solid #f6f5f2; background:#e2e0db;`
      : `border-top: 1px solid #f6f5f2; border-left: 1px solid #f6f5f2; border-right: 2px solid #55544f; border-bottom: 2px solid #55544f;`}
`;

const DashPreview = styled.div`
  flex: 1;
  height: 100%;
  margin: 2px 5px 2px 2px;
  display: flex;
  align-items: center;
  padding: 0 4px;
  background: repeating-conic-gradient(#cfcdc8 0 25%, #e4e2dd 0 50%) 0 0 / 2px 2px;

  &::after {
    content: "";
    flex: 1;
    margin: 0 4px;
    height: 1px;
    background: #222;
  }
`;

const SliderBlock = styled.div`
  margin: 3px 0 0 4px;
  display: flex;
  flex-direction: column;
`;

const SliderLabel = styled.span<{ $muted?: boolean; $top: number }>`
  margin-top: ${(p) => p.$top}px;
  height: 15px;
  line-height: 15px;
  font-size: 13px;
  color: ${(p) => (p.$muted ? MUTED : "#111")};
`;

const SliderRow = styled.div<{ $gap: number }>`
  display: flex;
  align-items: center;
  padding-left: 2px;
  gap: ${(p) => p.$gap}px;
`;

const SliderTrack = styled.div<{ $w: number; $end?: boolean }>`
  width: ${(p) => p.$w}px;
  height: 15px;
  box-sizing: border-box;
  flex: none;
  display: flex;
  justify-content: ${(p) => (p.$end ? "flex-end" : "flex-start")};
  border-top: 1px solid #8e8c87;
  border-left: 1px solid #8e8c87;
  border-bottom: 1px solid #f6f5f2;
  border-right: 1px solid #f6f5f2;
`;

const SliderThumb = styled.div`
  width: 31px;
  box-sizing: border-box;
  display: flex;
  align-items: center;
  justify-content: center;
  background: ${BG};
  border-top: 1px solid #f6f5f2;
  border-left: 1px solid #f6f5f2;
  border-right: 1px solid #333;
  border-bottom: 1px solid #333;

  &::after {
    content: "";
    width: 1px;
    height: 9px;
    background: #8e8c87;
  }
`;

const DotsH = styled.div`
  width: 34px;
  height: 2px;
  margin: 2px 0 0 149px;
  background: repeating-linear-gradient(90deg, #111 0 1px, transparent 1px 5px);
`;

const SideBar = styled.div<{ $w: number; $line?: boolean }>`
  width: ${(p) => p.$w}px;
  flex: none;
  box-sizing: border-box;
  display: flex;
  flex-direction: column;
  align-items: center;
  border-left: 1px solid #f6f5f2;
  border-top: 1px solid #333;
  ${(p) => p.$line && "border-right: 1px solid #000;"}
`;

const SideGrip = styled(Grip)`
  align-self: stretch;
  height: 9px;
`;

const SideSlot = styled.div<{ $top: number; $on?: boolean }>`
  width: 24px;
  height: 24px;
  margin-top: ${(p) => p.$top}px;
  flex: none;
  display: flex;
  align-items: center;
  justify-content: center;
  box-sizing: border-box;
  ${(p) =>
    p.$on &&
    `background: ${TROUGH};
     box-shadow: inset 2px 2px 0 #333, inset -1px -1px 0 #f6f5f2;`}
`;

const SideSep = styled.div<{ $top: number }>`
  width: 16px;
  height: 1px;
  margin-top: ${(p) => p.$top}px;
  flex: none;
  background: #a9a7a2;
  border-bottom: 1px solid #f6f5f2;
`;

const MoreArrow = styled.i`
  margin-top: 22px;
  flex: none;
  border-top: 5px solid transparent;
  border-bottom: 5px solid transparent;
  border-left: 6px solid #000;
`;

const PaletteRow = styled.div`
  height: 17px;
  flex: none;
  margin: 1px 0 3px;
  display: flex;
  align-items: stretch;
`;

const NoColor = styled.svg`
  width: 18px;
  height: 17px;
  flex: none;
  display: block;
`;

const Swatches = styled.div`
  flex: 1;
  min-width: 0;
  display: flex;
  overflow: hidden;
`;

const Swatch = styled.div<{ $c: string }>`
  width: 16px;
  flex: none;
  background: #${(p) => p.$c};
`;

const PaletteMore = styled.div`
  width: 10px;
  flex: none;
  display: flex;
  align-items: center;
  justify-content: center;

  &::after {
    content: "";
    border-top: 4px solid transparent;
    border-bottom: 4px solid transparent;
    border-right: 5px solid #000;
  }
`;

const PaletteScroll = styled.div`
  height: 16px;
  flex: none;
  box-sizing: border-box;
  display: flex;
  background: ${TROUGH};
  border-top: 1px solid #a9a7a2;
  border-bottom: 1px solid #f6f5f2;
  padding-right: 13px;
`;

const StatusBar = styled.div`
  flex: 1;
  display: flex;
  align-items: center;
  min-height: 0;
`;

const StyleGrid = styled.div`
  width: 123px;
  margin-left: 3px;
  flex: none;
  display: grid;
  grid-template-columns: 70px 1fr;
  grid-auto-rows: 12px;
  font-size: 11.5px;
  line-height: 12px;
  color: #333;
`;

const OpacityLabel = styled.span`
  width: 14px;
  flex: none;
  font-size: 12px;
  color: #333;
`;

const StatusIcon = styled.div<{ $w: number }>`
  width: ${(p) => p.$w}px;
  flex: none;
  display: flex;
  justify-content: center;
`;

const LayerButton = styled.div`
  width: 81px;
  height: 24px;
  flex: none;
  margin-top: 1px;
  margin-left: 1px;
  box-sizing: border-box;
  display: flex;
  align-items: center;
  border-top: 1px solid #f6f5f2;
  border-left: 1px solid #f6f5f2;
  border-right: 1px solid #111;
  border-bottom: 1px solid #111;
`;

const LayerName = styled.span`
  flex: 1;
  padding-left: 6px;
  font-size: 12px;
  font-weight: 700;
`;

const StatusMessage = styled.div`
  flex: 1;
  padding-left: 5px;
  font-size: 13px;
  letter-spacing: 0.21px;
  white-space: nowrap;
  color: #222;
`;

const CoordBlock = styled.div`
  width: 74px;
  height: 100%;
  flex: none;
  box-sizing: border-box;
  border-left: 1px solid #a9a7a2;
  padding: 2px 0 0 2px;
  display: grid;
  grid-template-columns: 19px 1fr;
  grid-auto-rows: 12px;
  font-size: 11.5px;
  line-height: 12px;
  color: #333;
`;

const Mono = styled.span`
  font-family: "DejaVu Sans Mono", monospace;
  font-size: 11px;
`;

const ZoomLabel = styled.span`
  width: 13px;
  flex: none;
  font-size: 12px;
  color: #333;
`;

const ZoomBox = styled.div`
  width: 56px;
  height: 21px;
  box-sizing: border-box;
  flex: none;
  display: flex;
  border-top: 2px solid #222;
  border-left: 2px solid #222;
  border-right: 1px solid #f6f5f2;
  border-bottom: 1px solid #f6f5f2;
  background: #fff;
`;

const ZoomValue = styled.div`
  flex: 1;
  padding-left: 9px;
  font-size: 12.5px;
  display: flex;
  align-items: center;
`;

const ZoomSpinUp = styled(SpinHalf)`
  &::after {
    border-bottom-color: #000;
    border-top-color: #000;
  }
`;

const ResizeGrip = styled.svg`
  width: 18px;
  height: 25px;
  flex: none;
  display: block;
`;

const TopRuler: React.FC = () => {
  const step = 95.4;
  const ticks = [];
  for (let i = -3; i < 120; i++) {
    const x = 90 + (step / 10) * i - 34;
    if (x < 17 || x > 1146) continue;
    const major = i % 10 === 0;
    const mid = i % 5 === 0;
    ticks.push(
      <line key={i} x1={x + 0.5} x2={x + 0.5} y1={major ? 4 : mid ? 11 : 14} y2={19} stroke="#222" />
    );
  }
  const labels = [-1000, -750, -500, -250, 0, 250, 500, 750, 1000, 1250, 1500, 1750];
  return (
    <Ruler $wide width={1146} height={19}>
      {ticks}
      {labels.map((v, k) => (
        <text key={v} x={90 + step * k - 34 + 2} y={10} fontSize="8" fontFamily="Liberation Sans" fill="#333">
          {v}
        </text>
      ))}
      <path d="M779 14h8l-4 5z" fill="#000" />
    </Ruler>
  );
};

const LeftRuler: React.FC = () => {
  const step = 123.7;
  const ticks = [];
  for (let i = 0; i < 60; i++) {
    const y = 193 + (step / 10) * (i - 10) - 81;
    if (y < 0 || y > 700) continue;
    const major = i % 10 === 0;
    const mid = i % 5 === 0;
    ticks.push(
      <line key={i} y1={y + 0.5} y2={y + 0.5} x1={major ? 3 : mid ? 11 : 14} x2={17} stroke="#222" />
    );
  }
  const labels = [1250, 1000, 750, 500, 250, 0];
  return (
    <Ruler width={17} height={700}>
      {ticks}
      {labels.map((v, k) => {
        const top = 193 + step * (k - 1) - 81;
        return String(v)
          .split("")
          .map((ch, j) => {
            const y = top + 9 + j * 8;
            // digits scrolled past the top of the ruler are not drawn
            if (y < 8) return null;
            return (
              <text key={`${v}-${j}`} x={4} y={y} fontSize="8" fontFamily="Liberation Sans" fill="#333">
                {ch}
              </text>
            );
          });
      })}
      <path d="M11 296v11l6-5.5z" fill="#000" />
    </Ruler>
  );
};

const Drawing: React.FC = () => (
  <Canvas width={1129} height={700} viewBox="51 81 1129 700">
    <rect x="598" y="170" width="368.5" height="521" fill="#666" />
    <rect x="595.5" y="167.5" width="368" height="521" fill="#fff" stroke="#666" />
    <rect x="598.5" y="237.5" width="360" height="360.5" fill="#fff" stroke="#333" strokeWidth="1.7" />
    <circle cx="777" cy="417.5" r="172" fill="#000" />
    <path
      fill="#fff"
      d="M776.7 260 907.3 335 938 318 944 328 914 345V497.3L783.3 571.7V590.5H771.7V571.7L640 497.3V345L610 328.5 616 318 646.7 335Z"
    />
    <path d="M687.3 312.3 713.3 326.7 751.7 297.3 732.3 286 700 290Z" fill="#000" />
    <ellipse cx="773.3" cy="335.8" rx="61" ry="40.8" fill="#000" />
    <ellipse cx="709" cy="456.6" rx="61" ry="40.8" transform="rotate(60 709 456.6)" fill="#000" />
    <ellipse cx="847.4" cy="456" rx="61" ry="40.8" transform="rotate(-60 847.4 456)" fill="#000" />
    <path d="M681.7 480V522L736 556V500Z" fill="#000" />
    <path d="M916 392 880 412V463L916 444Z" fill="#000" />
  </Canvas>
);

const SideColumn: React.FC<{ items: [string, number, boolean?][]; s: number }> = ({ items, s }) => (
  <>
    {items.map(([n, top, on], i) =>
      n === "-" ? (
        <SideSep key={i} $top={top} />
      ) : (
        <SideSlot key={i} $top={top} $on={on}>
          <Icon n={n} s={s} />
        </SideSlot>
      )
    )}
  </>
);

const App: React.FC = () => (
  <Root>
    <GlobalStyle />
    <Defs>
      <defs>
        <linearGradient id="gBlue" x1="0" y1="0" x2="1" y2="1">
          <stop offset="0" stopColor="#e8f0f8" />
          <stop offset="1" stopColor="#9dbdd8" />
        </linearGradient>
        <linearGradient id="gGrey" x1="0" y1="0" x2="0" y2="1">
          <stop offset="0" stopColor="#eee" />
          <stop offset="1" stopColor="#777" />
        </linearGradient>
        <linearGradient id="gPurple" x1="0" y1="0" x2="1" y2="1">
          <stop offset="0" stopColor="#c8c8e4" />
          <stop offset="1" stopColor="#55558f" />
        </linearGradient>
        <linearGradient id="gPink" x1="0" y1="0" x2="1" y2="1">
          <stop offset="0" stopColor="#fdeaea" />
          <stop offset="1" stopColor="#f49aa4" />
        </linearGradient>
        <linearGradient id="gGreen" x1="0" y1="0" x2="1" y2="0">
          <stop offset="0" stopColor="#a8d96a" />
          <stop offset="1" stopColor="#2f7a22" />
        </linearGradient>
        <linearGradient id="gGreenFade" x1="0" y1="1" x2="1" y2="0">
          <stop offset="0" stopColor="#3bb56b" />
          <stop offset="1" stopColor="#f2f7f2" />
        </linearGradient>
        <linearGradient id="gSalmon" x1="0" y1="0" x2="1" y2="1">
          <stop offset="0" stopColor="#fff2ec" />
          <stop offset="1" stopColor="#efa896" />
        </linearGradient>
        <linearGradient id="gPage" x1="0" y1="0" x2="1" y2="1">
          <stop offset="0" stopColor="#fff" />
          <stop offset="1" stopColor="#aaa" />
        </linearGradient>
        {[
          ["ditherBrown", "#a9693d", 2],
          ["ditherBlue", "#7f93ad", 2],
          ["ditherGold", "#caa04a", 2],
          ["ditherGreen", "#4f7d44", 2],
          ["ditherSteel", "#5a6f8a", 2.2857],
        ].map(([id, c, u]) => {
          const size = u as number;
          return (
            <pattern key={id as string} id={id as string} width={size} height={size} patternUnits="userSpaceOnUse">
              <rect width={size} height={size} fill="#e2e0db" />
              <rect width={size / 2} height={size / 2} fill={c as string} />
              <rect x={size / 2} y={size / 2} width={size / 2} height={size / 2} fill={c as string} />
            </pattern>
          );
        })}
      </defs>
    </Defs>

    <MenuBar>
      {menus.map(([a, u, b]) => (
        <MenuItem key={a + u + b}>
          {a}
          <u>{u}</u>
          {b}
        </MenuItem>
      ))}
    </MenuBar>

    <Toolbar>
      <ToolbarGrip />
      <ToolbarRow>
        {["newDoc", "selAll", "selLayers"].map((n) => (
          <ActionSlot key={n}>
            <Icon n={n} />
          </ActionSlot>
        ))}
        <ToolbarSep $w={11} />
        {["rotCcw", "rotCw", "flipH", "flipV"].map((n) => (
          <ActionSlot key={n}>
            <Icon n={n} />
          </ActionSlot>
        ))}
        <ToolbarSep $w={13} />
        {["alignBottom", "alignDown", "alignUp", "alignTop"].map((n) => (
          <ActionSlot key={n}>
            <Icon n={n} />
          </ActionSlot>
        ))}
        <ToolbarSep $w={10} />
        <CoordLabel $w={23}>X</CoordLabel>
        <Spin w={54} h={18} v="20.293" fs={11} tight />
        <CoordLabel $w={22}>Y</CoordLabel>
        <Spin w={54} h={18} v="198.753" fs={11} tight />
        <CoordLabel $w={25}>W</CoordLabel>
        <Spin w={54} h={18} v="694.957" fs={11} tight />
        <LockSlot>
          <Icon n="lockOpen" s={18} />
        </LockSlot>
        <CoordLabel $w={21}>H</CoordLabel>
        <Spin w={54} h={18} v="695.122" fs={11} tight />
        <Combo $w={48} $h={24}>
          <ComboText>px</ComboText>
          <ComboSep />
          <ArrowDown />
        </Combo>
        <ToolbarSep $w={13} />
        <AffectLabel>Affect:</AffectLabel>
        {["affect1", "affect2", "affect3", "affect4"].map((n) => (
          <AffectButton key={n}>
            <Icon n={n} s={20} />
          </AffectButton>
        ))}
      </ToolbarRow>
    </Toolbar>

    <Workspace>
      <ToolColumn>
        <ColumnGrip />
        {leftTools.map((n, i) => (
          <ToolSlot key={n} $on={i === 0}>
            <Icon n={n} s={25} />
          </ToolSlot>
        ))}
      </ToolColumn>

      <CanvasArea>
        <TopRuler />
        <ZoomCorner>
          <Icon n="zoom" s={14} />
        </ZoomCorner>
        <DockGripColumn>
          <DotsV />
        </DockGripColumn>
        <LeftRuler />
        <Drawing />
        <VScroll>
          <ScrollArrow $dir="up" />
          <ScrollGap $size={198} $vertical />
          <ScrollThumb $size={276} $vertical />
          <ScrollGap />
          <ScrollArrow $dir="down" />
        </VScroll>
        <div />
        <HScroll>
          <ScrollArrow $dir="left" $muted />
          <ScrollThumb $size={920} />
          <ScrollGap />
          <ScrollArrow $dir="right" />
        </HScroll>
        <CmsIcon>
          <IconSvg width={12} height={12} viewBox="0 0 12 12">
            <path d="M1 0 11 6 1 12z" fill="#6aa96a" />
            <path d="M1 0 6 3v6l-5 3z" fill="#3f6fb5" />
            <path d="M6 6l5 0-5 3z" fill="#c95a5a" />
          </IconSvg>
        </CmsIcon>
      </CanvasArea>

      <Dock>
        <DockPanel>
          <DockTitle>
            <Icon n="fillStroke" s={17} />
            <DockTitleText>Fill and Stroke (Shift+Ctrl+F)</DockTitleText>
            <DockButton>▸</DockButton>
            <DockButton>×</DockButton>
          </DockTitle>
          <DockBody>
            <Tabs>
              <Tab $w={40}>
                <IconSvg width={12} height={12} viewBox="0 0 24 24">
                  <rect width="24" height="24" fill="url(#gBlue)" />
                </IconSvg>
                <span>Fill</span>
              </Tab>
              <Tab $w={92}>
                <IconSvg width={12} height={12} viewBox="0 0 24 24">
                  <rect x="1" y="1" width="22" height="22" fill="none" stroke="#555" strokeWidth="2" />
                </IconSvg>
                <span>Stroke paint</span>
              </Tab>
              <Tab $w={92} $on>
                <Icon n="strokeStyle" s={13} />
                <span>
                  Stroke st<u>y</u>le
                </span>
              </Tab>
            </Tabs>
            <Notebook>
              <FormLabel>Width:</FormLabel>
              <Controls $gap={5}>
                <Spin w={76} h={22} v="0.000" />
                <Combo $w={50} $h={26}>
                  <ComboText $muted>px</ComboText>
                  <ComboSep />
                  <UpDown />
                </Combo>
              </Controls>
              <FormLabel>Join:</FormLabel>
              <Controls $gap={3}>
                <Toggle $on>
                  <Icon n="joinMiter" s={28} box={32} />
                </Toggle>
                <Toggle>
                  <Icon n="joinRound" s={28} box={32} />
                </Toggle>
                <Toggle>
                  <Icon n="joinBevel" s={28} box={32} />
                </Toggle>
              </Controls>
              <FormLabel>Miter limit:</FormLabel>
              <Controls>
                <Spin w={62} h={21} v="4.00" />
              </Controls>
              <FormLabel>Cap:</FormLabel>
              <Controls $gap={3}>
                <Toggle $on>
                  <Icon n="capButt" s={28} box={32} />
                </Toggle>
                <Toggle>
                  <Icon n="capRound" s={28} box={32} />
                </Toggle>
                <Toggle>
                  <Icon n="capSquare" s={28} box={32} />
                </Toggle>
              </Controls>
              <FormLabel>Dashes:</FormLabel>
              <Controls $gap={2}>
                <Combo $w={115} $h={26}>
                  <DashPreview />
                  <ComboSep />
                  <UpDown />
                </Combo>
                <Spin w={54} h={21} v="0.00" />
              </Controls>
              {["Start Markers:", "Mid Markers:", "End Markers:"].map((label) => (
                <React.Fragment key={label}>
                  <FormLabel>{label}</FormLabel>
                  <Controls>
                    <Combo $w={208} $h={32}>
                      <ComboText $muted>None</ComboText>
                      <ComboSep />
                      <UpDown />
                    </Combo>
                  </Controls>
                </React.Fragment>
              ))}
            </Notebook>
            <SliderBlock>
              <SliderLabel $muted $top={0}>
                B<u>l</u>ur:
              </SliderLabel>
              <SliderRow $gap={4}>
                <SliderTrack $w={253}>
                  <SliderThumb />
                </SliderTrack>
                <Spin w={55} h={21} v="0.0" />
              </SliderRow>
              <SliderLabel $top={5}>Opacity, %</SliderLabel>
              <SliderRow $gap={7}>
                <SliderTrack $w={250} $end>
                  <SliderThumb />
                </SliderTrack>
                <Spin w={55} h={21} v="100.0" />
              </SliderRow>
            </SliderBlock>
          </DockBody>
        </DockPanel>
        <DotsH />
      </Dock>

      <SideBar $w={31} $line>
        <SideGrip />
        <SideColumn items={commands} s={22} />
        <MoreArrow />
      </SideBar>
      <SideBar $w={29}>
        <SideGrip />
        <SideColumn items={snaps} s={20} />
      </SideBar>
    </Workspace>

    <PaletteRow>
      <NoColor viewBox="0 0 18 17">
        <rect x=".5" y=".5" width="17" height="16" fill="#fff" stroke="#111" />
        <path d="M1 1 17 16M17 1 1 16" stroke="#8a2020" strokeWidth="1.3" />
      </NoColor>
      <Swatches>
        {palette.split(" ").map((c, i) => (
          <Swatch key={i} $c={c} />
        ))}
      </Swatches>
      <PaletteMore />
    </PaletteRow>

    <PaletteScroll>
      <ScrollArrow $dir="left" $muted />
      <ScrollThumb $size={355} />
      <ScrollGap />
      <ScrollArrow $dir="right" />
    </PaletteScroll>

    <StatusBar>
      <StyleGrid>
        <span>Fill:</span>
        <span>N/A</span>
        <span>Stroke:</span>
        <span>N/A</span>
      </StyleGrid>
      <OpacityLabel>O:</OpacityLabel>
      <Spin w={38} h={19} v="0" fs={12} />
      <StatusIcon $w={25}>
        <Icon n="eye" s={14} />
      </StatusIcon>
      <StatusIcon $w={16}>
        <Icon n="lockOpen" s={15} />
      </StatusIcon>
      <LayerButton>
        <LayerName>•Layer 1</LayerName>
        <ComboSep />
        <ArrowDown />
      </LayerButton>
      <StatusMessage>No objects selected. Click, Shift+click, or drag around objects to select.</StatusMessage>
      <CoordBlock>
        <span>X:</span>
        <Mono>909.14</Mono>
        <span>Y:</span>
        <Mono>618.21</Mono>
      </CoordBlock>
      <ZoomLabel>Z:</ZoomLabel>
      <ZoomBox>
        <ZoomValue>50%</ZoomValue>
        <SpinArrows>
          <ZoomSpinUp />
          <ZoomSpinUp $down />
        </SpinArrows>
      </ZoomBox>
      <ResizeGrip viewBox="0 0 18 25">
        <path d="M16 12 5 24M17 16 9 24M17 20 13 24" stroke="#99978f" />
      </ResizeGrip>
    </StatusBar>
  </Root>
);

export default App;
